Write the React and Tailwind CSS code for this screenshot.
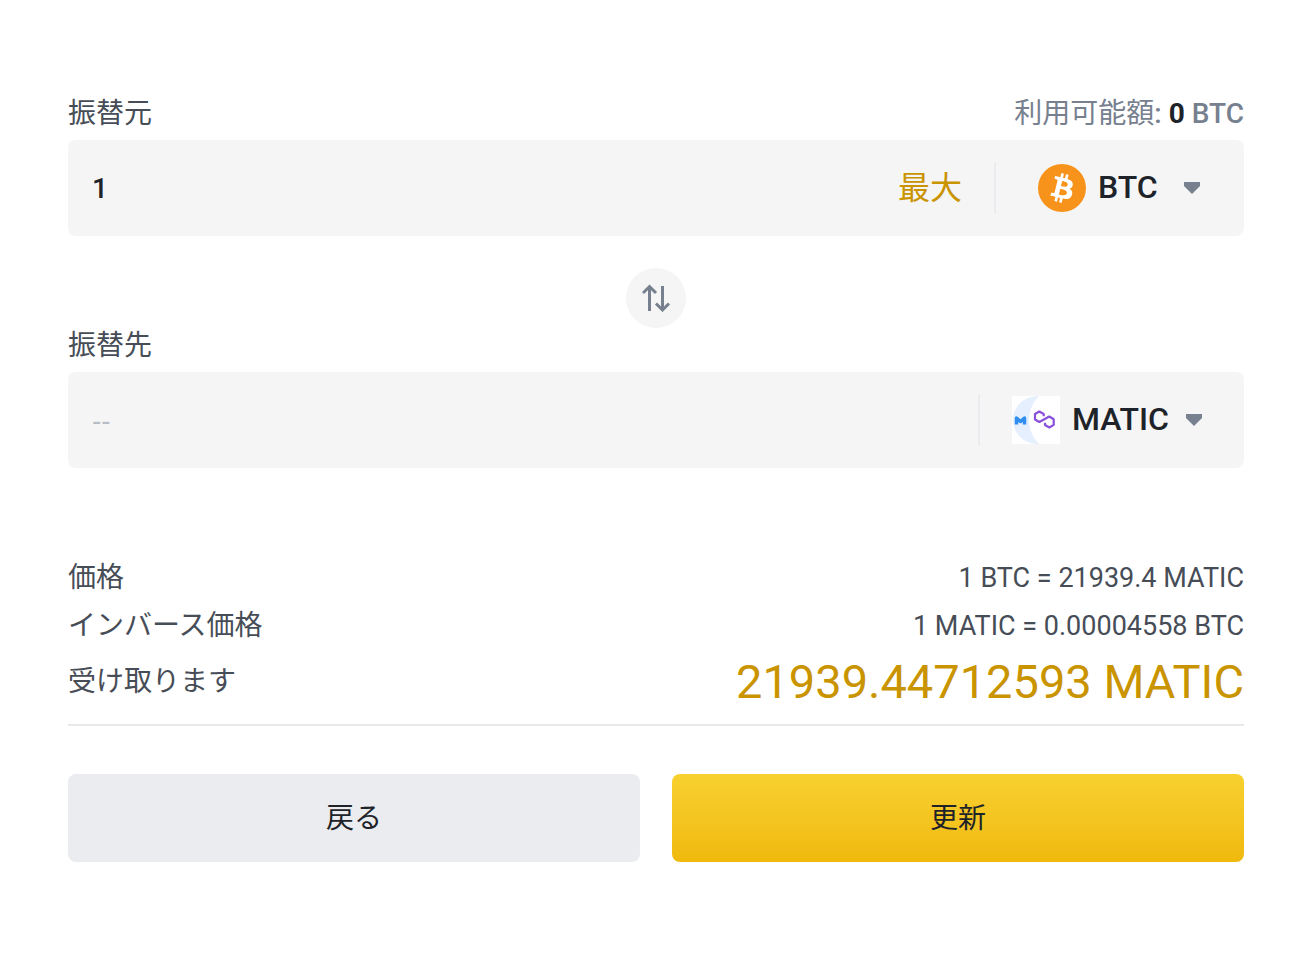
import React, { useState } from 'react';

const rates = [
  { label: '価格', value: '1 BTC = 21939.4 MATIC' },
  { label: 'インバース価格', value: '1 MATIC = 0.00004558 BTC' },
];

function BtcIcon() {
  return (
    <svg viewBox="0 0 32 32" className="size-12 shrink-0" aria-hidden="true">
      <circle cx="16" cy="16" r="16" fill="#f7931a" />
      <path
        fill="#fff"
        d="M23.189 14.02c.314-2.096-1.283-3.223-3.465-3.975l.708-2.84-1.728-.43-.69 2.765c-.454-.114-.92-.22-1.385-.326l.695-2.783L15.596 6l-.708 2.839c-.376-.086-.746-.17-1.104-.26l.002-.009-2.384-.595-.46 1.846s1.283.294 1.256.312c.7.175.826.638.805 1.006l-.806 3.235c.048.012.11.03.18.057l-.183-.045-1.13 4.532c-.086.212-.303.531-.793.41.018.025-1.256-.313-1.256-.313l-.858 1.978 2.25.561c.418.105.828.215 1.231.318l-.715 2.872 1.727.43.708-2.84c.472.127.93.245 1.378.357l-.706 2.828 1.728.43.715-2.866c2.948.558 5.164.333 6.097-2.333.752-2.146-.037-3.385-1.588-4.192 1.13-.26 1.98-1.003 2.207-2.538zm-3.95 5.538c-.533 2.147-4.148.986-5.32.695l.95-3.805c1.172.293 4.929.872 4.37 3.11zm.535-5.569c-.487 1.953-3.495.96-4.47.717l.86-3.45c.975.243 4.118.696 3.61 2.733z"
      />
    </svg>
  );
}

function MaticIcon() {
  return (
    <svg viewBox="0 0 48 48" className="size-12 shrink-0" aria-hidden="true">
      <rect width="48" height="48" fill="#fff" />
      <path d="M27 0C11 0 1 11 1 24s10 24 26 24C20.500 41 17 33 17 24S20.500 7 27 0z" fill="#e6effe" />
      <path d="M4.500 28.500v-6.500l4 3.500 4-3.500v6.500" fill="none" stroke="#2f8ef0" strokeWidth="3.500" strokeLinejoin="round" />
      <path
        d="M31.700 20.300V18l-4.400-2.500L23 18v5.500l4.300 2.500 10-5.500 4.400 2.700v5.700l-4.400 2.600L33 29v-2.300"
        fill="none"
        stroke="#8950dc"
        strokeWidth="2.200"
        strokeLinejoin="round"
      />
    </svg>
  );
}

function Caret() {
  return (
    <svg viewBox="0 0 16 12" className="pointer-events-none h-3 w-4 shrink-0" fill="#76808f" aria-hidden="true">
      <path d="M0 0h16v4L8 12 0 4z" />
    </svg>
  );
}

function CoinSelect({ icon, coin, label, className }) {
  return (
    <label className={`flex h-13 items-center border-l-2 border-[#eaecef] ${className}`}>
      {icon}
      <select
        aria-label={label}
        defaultValue={coin}
        className="mr-auto ml-3 field-sizing-content appearance-none bg-transparent pb-0.5 text-[32px] font-medium text-[#1e2329] outline-none"
      >
        <option>{coin}</option>
      </select>
      <Caret />
    </label>
  );
}

export default function App() {
  const [amount, setAmount] = useState('1');

  return (
    <main className="bg-white pt-[98px] pr-[54px] pb-24 pl-[68px] font-[Roboto,'Noto_Sans_CJK_JP',sans-serif] text-[28px] text-[#474d57]">
      <div className="mb-2.5 flex items-center justify-between leading-8">
        <label htmlFor="from">振替元</label>
        <p className="font-medium text-[#76808f]">
          <span className="font-normal">利用可能額</span>: <span className="font-bold text-[#1e2329]">0</span> BTC
        </p>
      </div>
      <div className="flex h-24 items-center rounded-lg bg-[#f5f5f5] pl-6">
        <input
          id="from"
          value={amount}
          onChange={(e) => setAmount(e.target.value)}
          className="min-w-0 flex-1 bg-transparent pt-0.5 font-medium text-[#1e2329] outline-none"
        />
        <button type="button" className="mr-8 text-[32px] text-[#c99400]">最大</button>
        <CoinSelect icon={<BtcIcon />} coin="BTC" label="振替元の通貨" className="w-[250px] pr-11 pl-[42px]" />
      </div>

      <div className="mt-8 mb-0.5 flex justify-center">
        <button type="button" aria-label="入れ替え" className="flex size-15 items-center justify-center rounded-full bg-[#f5f5f5]">
          <svg viewBox="0 0 28 28" className="size-7" fill="none" stroke="#76808f" strokeWidth="3" aria-hidden="true">
            <path d="M7.500 27V3M1 9l6.500-6.500L14 9M20.500 2v24M14 19.500l6.500 6.500 6.500-6.500" />
          </svg>
        </button>
      </div>

      <div className="mb-2.5 leading-8">
        <label htmlFor="to">振替先</label>
      </div>
      <div className="flex h-24 items-center rounded-lg bg-[#f5f5f5] pl-6">
        <input
          id="to"
          placeholder="--"
          readOnly
          className="min-w-0 flex-1 bg-transparent pt-0.5 font-['Liberation_Sans',sans-serif] outline-none placeholder:text-[#b7bdc6]"
        />
        <CoinSelect icon={<MaticIcon />} coin="MATIC" label="振替先の通貨" className="w-[266px] pr-[42px] pl-8" />
      </div>

      <dl className="mt-[86px] border-b-2 border-[#e6e8ea] pb-2.5">
        {rates.map((rate) => (
          <div key={rate.label} className="flex h-12 items-center justify-between">
            <dt>{rate.label}</dt>
            <dd className="text-[27px]">{rate.value}</dd>
          </div>
        ))}
        <div className="flex h-16 items-center justify-between">
          <dt>受け取ります</dt>
          <dd className="text-[47px] text-[#c99400]">21939.44712593 MATIC</dd>
        </div>
      </dl>

      <div className="mt-12 grid grid-cols-2 gap-8 text-[#1e2329]">
        <button type="button" className="h-22 rounded-lg bg-[#eaecef] pt-0.5">戻る</button>
        <button type="button" className="h-22 rounded-lg bg-linear-to-b from-[#f8d12f] to-[#f0b90b] pt-0.5">更新</button>
      </div>
    </main>
  );
}
